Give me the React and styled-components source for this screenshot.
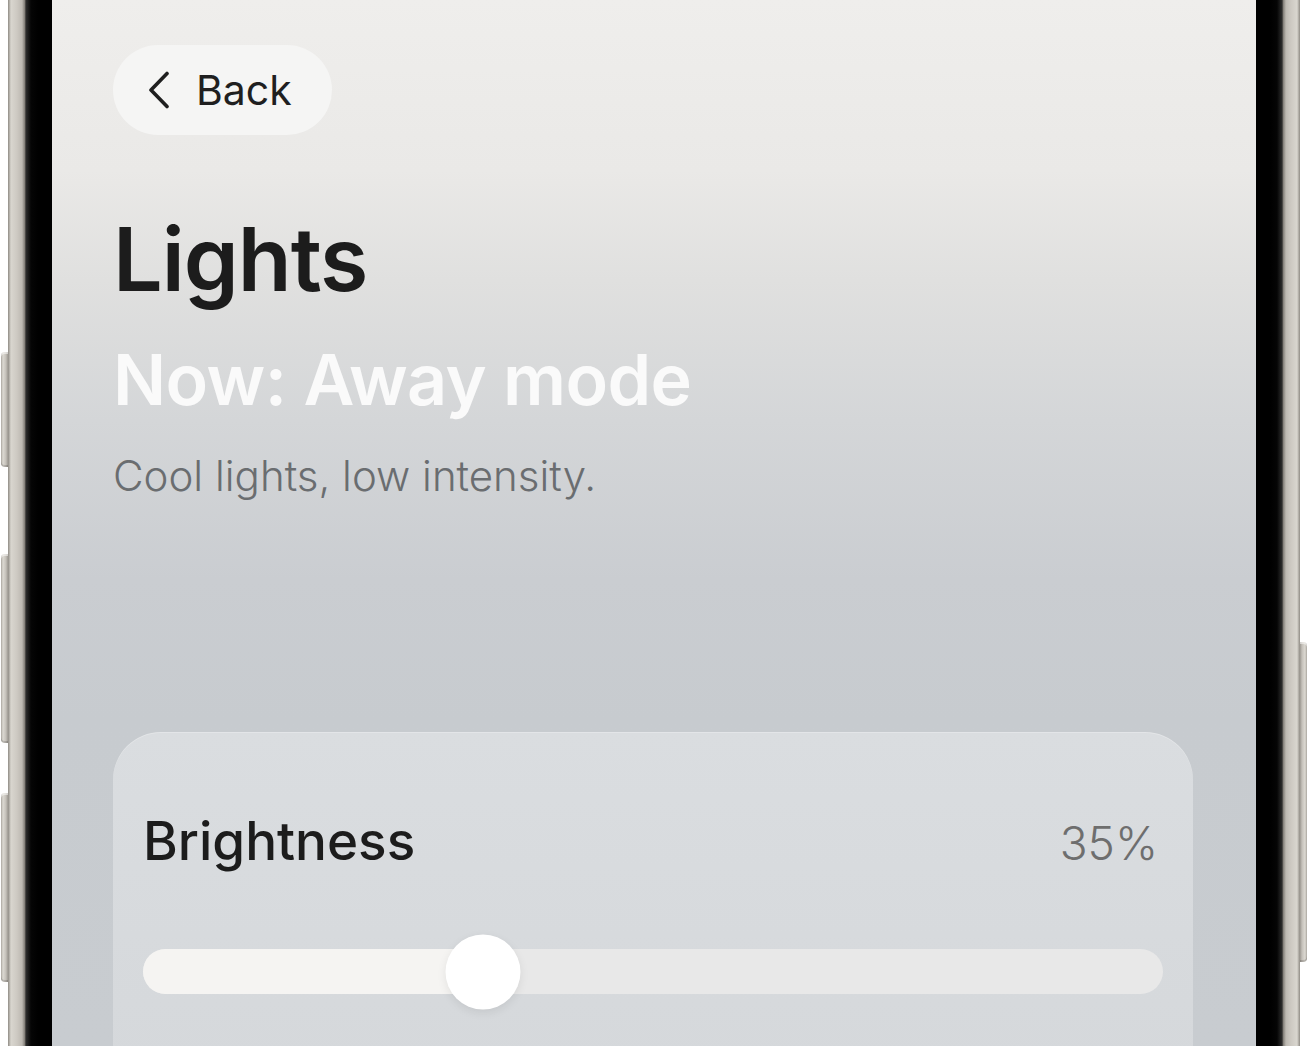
import React from "react";
import styled, { createGlobalStyle } from "styled-components";

const Global = createGlobalStyle`
  html, body { margin: 0; padding: 0; background: #ffffff; }
  body { font-family: Inter, "Noto Sans", sans-serif; -webkit-font-smoothing: antialiased; }
  #root { width: 1308px; height: 1046px; overflow: hidden; }
`;

const Stage = styled.div`
  display: flex;
  width: 1308px;
  height: 1046px;
  overflow: hidden;
  background: #ffffff;
`;

const Rail = styled.div`
  width: 8px;
  flex: 0 0 8px;
  display: flex;
  flex-direction: column;
  align-items: ${(p) => (p.$side === "left" ? "flex-end" : "flex-start")};
`;

const SideButton = styled.div`
  flex: none;
  width: 7px;
  height: ${(p) => p.$h}px;
  margin-top: ${(p) => p.$top}px;
  border-radius: ${(p) => (p.$side === "left" ? "4px 0 0 4px" : "0 4px 4px 0")};
  background: ${(p) =>
    p.$side === "left"
      ? "linear-gradient(90deg, #a9a59e 0, #dcd9d2 2px, #c4c0b9 5px, #9d9992 7px)"
      : "linear-gradient(270deg, #a9a59e 0, #dcd9d2 2px, #c4c0b9 5px, #9d9992 7px)"};
  box-shadow: inset 0 2px 0 rgba(255,255,255,0.5), inset 0 -2px 0 rgba(0,0,0,0.15);
`;

const Frame = styled.div`
  flex: 1 1 auto;
  display: flex;
  padding: 0 18px;
  background: linear-gradient(
    90deg,
    #8f8b84 0px,
    #d9d6cf 3px,
    #cdc9c2 9px,
    #bdb9b2 14px,
    #7c7872 17px,
    #1a1a1a 18px,
    #1a1a1a calc(100% - 18px),
    #7c7872 calc(100% - 17px),
    #bdb9b2 calc(100% - 14px),
    #cdc9c2 calc(100% - 9px),
    #d9d6cf calc(100% - 3px),
    #8f8b84 100%
  );
`;

const Bezel = styled.div`
  flex: 1 1 auto;
  display: flex;
  padding: 0 26px;
  background: linear-gradient(
    90deg,
    #2c2c2c 0px,
    #050505 5px,
    #000 12px,
    #000 calc(100% - 12px),
    #050505 calc(100% - 5px),
    #2c2c2c 100%
  );
`;

const Screen = styled.div`
  flex: 1 1 auto;
  min-height: 0;
  overflow: hidden;
  padding: 45px 63px 0 61px;
  background: linear-gradient(
    180deg,
    #efeeec 0px,
    #eae9e7 170px,
    #e0e0df 280px,
    #d4d6d8 420px,
    #cacdd1 580px,
    #c7cbcf 720px,
    #c8ccd0 100%
  );
  display: flex;
  flex-direction: column;
  align-items: flex-start;

  & > * { flex-shrink: 0; }
`;

const BackButton = styled.button`
  display: flex;
  align-items: center;
  gap: 26px;
  height: 90px;
  padding: 0 40px 0 35px;
  border: none;
  border-radius: 45px;
  background: #f5f5f4;
  color: #1f1f1f;
  font-family: Inter, sans-serif;
  font-size: 41px;
  font-weight: 400;
  line-height: 1;
  cursor: pointer;
`;

const Title = styled.h1`
  margin: 80px 0 0;
  font-size: 88px;
  font-weight: 600;
  line-height: 1;
  letter-spacing: -1px;
  color: #1c1c1c;
`;

const Mode = styled.h2`
  margin: 42px 0 0;
  font-size: 70px;
  font-weight: 600;
  line-height: 1;
  letter-spacing: -0.6px;
  color: #fafafa;
`;

const Description = styled.p`
  margin: 40px 0 0;
  font-size: 42px;
  font-weight: 300;
  line-height: 1;
  color: #6a6d70;
`;

const Card = styled.section`
  align-self: stretch;
  margin-top: 235px;
  padding: 83px 30px 60px 30px;
  border-radius: 48px 48px 0 0;
  background: linear-gradient(180deg, #dadde0 0%, #d7dadd 60%, #d5d8db 100%);
  box-shadow: inset 0 1px 0 rgba(255,255,255,0.25);
`;

const CardHeader = styled.div`
  display: flex;
  justify-content: space-between;
  align-items: baseline;
  padding-right: 5px;
`;

const Label = styled.span`
  font-size: 53px;
  font-weight: 500;
  line-height: 1;
  color: #1c1c1c;
`;

const Value = styled.span`
  font-size: 46px;
  font-weight: 300;
  line-height: 1;
  color: #6e6e6e;
`;

const SliderWrap = styled.div`
  margin-top: 66px;
  height: 75px;
  display: flex;
  align-items: center;
`;

const Track = styled.div`
  position: relative;
  flex: 1 1 auto;
  height: 45px;
  border-radius: 23px;
  background: #e8e8e8;
`;

const Fill = styled.div`
  height: 100%;
  border-radius: 23px 0 0 23px;
  background: #f5f4f2;
`;

const Thumb = styled.div`
  position: absolute;
  top: 50%;
  width: 75px;
  height: 75px;
  border-radius: 50%;
  background: #ffffff;
  transform: translate(-50%, -50%);
  box-shadow: 0 3px 10px rgba(0, 0, 0, 0.08);
`;

function ChevronLeft() {
  return (
    <svg width="22" height="38" viewBox="0 0 22 38" fill="none">
      <polyline
        points="19,2.5 3,19 19,35.5"
        stroke="#1f1f1f"
        strokeWidth="3.6"
        strokeLinecap="round"
        strokeLinejoin="round"
      />
    </svg>
  );
}

function Slider({ position }) {
  return (
    <SliderWrap>
      <Track>
        <Fill style={{ width: `${position}%` }} />
        <Thumb style={{ left: `${position}%` }} />
      </Track>
    </SliderWrap>
  );
}

export default function App() {
  return (
    <>
      <Global />
      <Stage>
        <Rail $side="left">
          <SideButton $side="left" $top={352} $h={115} />
          <SideButton $side="left" $top={87} $h={189} />
          <SideButton $side="left" $top={50} $h={189} />
        </Rail>
        <Frame>
          <Bezel>
            <Screen>
              <BackButton>
                <ChevronLeft />
                Back
              </BackButton>
              <Title>Lights</Title>
              <Mode>Now: Away mode</Mode>
              <Description>Cool lights, low intensity.</Description>
              <Card>
                <CardHeader>
                  <Label>Brightness</Label>
                  <Value>35%</Value>
                </CardHeader>
                <Slider position={33.3} />
              </Card>
            </Screen>
          </Bezel>
        </Frame>
        <Rail $side="right">
          <SideButton $side="right" $top={642} $h={320} />
        </Rail>
      </Stage>
    </>
  );
}
